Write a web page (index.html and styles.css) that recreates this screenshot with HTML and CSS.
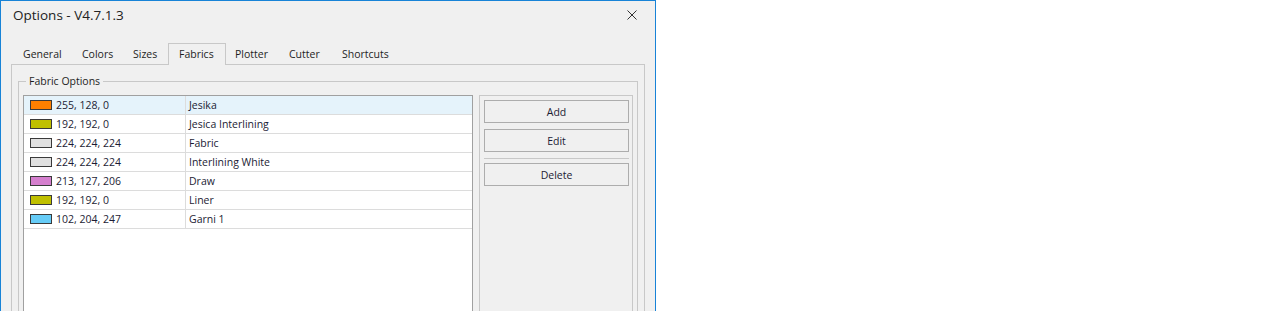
FILE: index.html
```html
<!DOCTYPE html>
<html lang="en">
<head>
  <meta charset="UTF-8" />
  <title>Options - V4.7.1.3</title>
  <link rel="stylesheet" href="styles.css">
</head>
<body>
  <div class="window">
    <div class="titlebar">
      <span class="title">Options - V4.7.1.3</span>
      <svg class="close" width="10" height="10" viewBox="0 0 10 10">
        <path d="M0.5 0.5 L9.5 9.5 M9.5 0.5 L0.5 9.5" stroke="#333" stroke-width="1" fill="none"/>
      </svg>
    </div>

    <div class="tabs">
      <div class="tab tab-general">General</div>
      <div class="tab tab-colors">Colors</div>
      <div class="tab tab-sizes">Sizes</div>
      <div class="tab active">Fabrics</div>
      <div class="tab tab-plotter">Plotter</div>
      <div class="tab tab-cutter">Cutter</div>
      <div class="tab">Shortcuts</div>
    </div>

    <div class="tab-panel">
      <fieldset class="group">
        <legend>Fabric Options</legend>
        <div class="group-body">
          <div class="list">
            <div class="row selected">
              <div class="cell color-cell"><span class="swatch" style="background: rgb(255, 128, 0)"></span>255, 128, 0</div>
              <div class="cell name-cell">Jesika</div>
            </div>
            <div class="row">
              <div class="cell color-cell"><span class="swatch" style="background: rgb(192, 192, 0)"></span>192, 192, 0</div>
              <div class="cell name-cell">Jesica Interlining</div>
            </div>
            <div class="row">
              <div class="cell color-cell"><span class="swatch" style="background: rgb(224, 224, 224)"></span>224, 224, 224</div>
              <div class="cell name-cell">Fabric</div>
            </div>
            <div class="row">
              <div class="cell color-cell"><span class="swatch" style="background: rgb(224, 224, 224)"></span>224, 224, 224</div>
              <div class="cell name-cell">Interlining White</div>
            </div>
            <div class="row">
              <div class="cell color-cell"><span class="swatch" style="background: rgb(213, 127, 206)"></span>213, 127, 206</div>
              <div class="cell name-cell">Draw</div>
            </div>
            <div class="row">
              <div class="cell color-cell"><span class="swatch" style="background: rgb(192, 192, 0)"></span>192, 192, 0</div>
              <div class="cell name-cell">Liner</div>
            </div>
            <div class="row">
              <div class="cell color-cell"><span class="swatch" style="background: rgb(102, 204, 247)"></span>102, 204, 247</div>
              <div class="cell name-cell">Garni 1</div>
            </div>
          </div>

          <div class="side">
            <button class="btn">Add</button>
            <button class="btn">Edit</button>
            <div class="separator"></div>
            <button class="btn">Delete</button>
          </div>
        </div>
      </fieldset>
    </div>
  </div>
</body>
</html>
```

FILE: styles.css
```css
* {
  box-sizing: border-box;
}
html, body {
  height: 100%;
  overflow: hidden;
}
body {
  margin: 0;
  background: #ffffff;
  font-family: "Open Sans", "Liberation Sans", sans-serif;
  font-size: 10.5px;
  color: #1e1e1e;
}
.window {
  width: 656px;
  background: #f0f0f0;
  border: 1px solid #1883d7;
  border-bottom: none;
}
.titlebar {
  height: 42px;
  display: flex;
  justify-content: space-between;
  align-items: flex-start;
  padding: 5px 18px 0 12px;
}
.title {
  font-size: 13.5px;
  line-height: 19px;
  color: #222;
}
.close {
  margin-top: 4px;
  display: block;
}
.tabs {
  display: flex;
  height: 21px;
  margin-left: 11px;
}
.tab {
  height: 21px;
  padding: 4px 0 0 11px;
  line-height: 15px;
  white-space: nowrap;
}
.tab-general { width: 59px; }
.tab-colors { width: 51px; }
.tab-sizes { width: 46px; }
.tab-plotter { width: 52px; padding-left: 9px; }
.tab-cutter { width: 53px; }
.tab.active {
  width: 58px;
  height: 22px;
  margin-bottom: -1px;
  padding: 3px 0 0 10px;
  border: 1px solid #c8c8c8;
  border-bottom: none;
  background: #f0f0f0;
  position: relative;
  z-index: 1;
}
.tab-panel {
  margin: 0 10px;
  border: 1px solid #c8c8c8;
}
.group {
  margin: 9px 6px 0 6px;
  padding: 6px 4px 4px 4px;
  border: 1px solid #c8c8c8;
  min-width: 0;
}
.group legend {
  margin-left: 3px;
  padding: 0 3px;
  line-height: 15px;
  color: #1e1e1e;
}
.group-body {
  display: flex;
  gap: 6px;
  height: 300px;
}
.list {
  width: 450px;
  background: #ffffff;
  border: 1px solid #a0a0a0;
}
.row {
  display: flex;
  height: 19px;
  border-bottom: 1px solid #dcdcdc;
  line-height: 18px;
  color: #1c1c34;
}
.row.selected {
  background: #e5f3fb;
}
.cell {
  white-space: nowrap;
}
.color-cell {
  width: 162px;
  border-right: 1px solid #dcdcdc;
  padding-left: 6px;
  display: flex;
  align-items: center;
}
.swatch {
  width: 22px;
  height: 10px;
  border: 1px solid #3a3a3a;
  margin-right: 4px;
  flex-shrink: 0;
}
.name-cell {
  padding-left: 3px;
}
.side {
  width: 154px;
  border: 1px solid #c8c8c8;
  padding: 4px 3px 4px 4px;
  display: flex;
  flex-direction: column;
  gap: 6px;
}
.btn {
  height: 23px;
  border: 1px solid #adadad;
  background: #f0f0f0;
  font-family: inherit;
  font-size: 10.5px;
  color: #1c1c34;
  padding: 0;
}
.separator {
  height: 1px;
  background: #c8c8c8;
  margin-bottom: -2px;
}
```
